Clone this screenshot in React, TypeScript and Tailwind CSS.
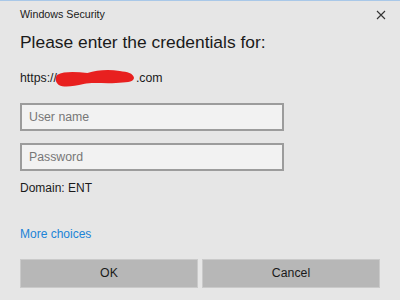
import React from "react";

function Scribble() {
  return (
    <svg
      className="absolute left-[55px] top-[68px]"
      width="80"
      height="19"
      viewBox="0 0 84 19"
      preserveAspectRatio="none"
    >
      <path
        d="M2 6 C 10 2, 22 3, 34 4 C 44 1, 56 0, 68 2 C 76 3, 82 4, 83 9 C 82 14, 74 13, 64 14 C 52 15, 40 13, 30 15 C 20 17, 10 19, 4 16 C 0 13, 0 9, 2 6 Z"
        fill="#e8201f"
      />
    </svg>
  );
}

export default function App() {
  return (
    <div
      className="relative w-[400px] h-[300px] bg-[#e6e6e6] border-t border-[#a9c8e8] overflow-hidden text-[#1a1a1a]"
      style={{ fontFamily: '"Liberation Sans", Arial, sans-serif' }}
    >
      <div className="flex items-center justify-between pl-5 pr-3 h-[27px]">
        <span className="text-[10.7px]">Windows Security</span>
        <svg width="10" height="10" viewBox="0 0 10 10" className="mr-[2px]">
          <path d="M1 1 L9 9 M9 1 L1 9" stroke="#333" strokeWidth="1.1" />
        </svg>
      </div>

      <div className="px-5">
        <h1 className="text-[17.4px] leading-[26px] mt-[1px]">
          Please enter the credentials for:
        </h1>

        <div className="text-[12.3px] leading-[16px] mt-[15px]">
          https://<span className="inline-block w-[79px]"></span>.com
        </div>

        <div className="mt-[17px] flex flex-col gap-[12px] w-[264px]">
          <div className="h-[28px] border-2 border-[#9c9c9c] bg-[#f2f2f2] flex items-center px-[7px] text-[12.3px] text-[#777]">
            User name
          </div>
          <div className="h-[28px] border-2 border-[#9c9c9c] bg-[#f2f2f2] flex items-center px-[7px] text-[12.3px] text-[#777]">
            Password
          </div>
        </div>

        <div className="text-[12px] leading-[16px] mt-[9px]">Domain: ENT</div>

        <div className="text-[12px] leading-[16px] mt-[30px] text-[#2083d6]">
          More choices
        </div>

        <div className="mt-[17px] flex gap-[4px]">
          <div className="w-[178px] h-[29px] bg-[#b7b7b7] border border-[#cacaca] flex items-center justify-center text-[12.3px]">
            OK
          </div>
          <div className="w-[178px] h-[29px] bg-[#b7b7b7] border border-[#cacaca] flex items-center justify-center text-[12.3px]">
            Cancel
          </div>
        </div>
      </div>

      <Scribble />
    </div>
  );
}
